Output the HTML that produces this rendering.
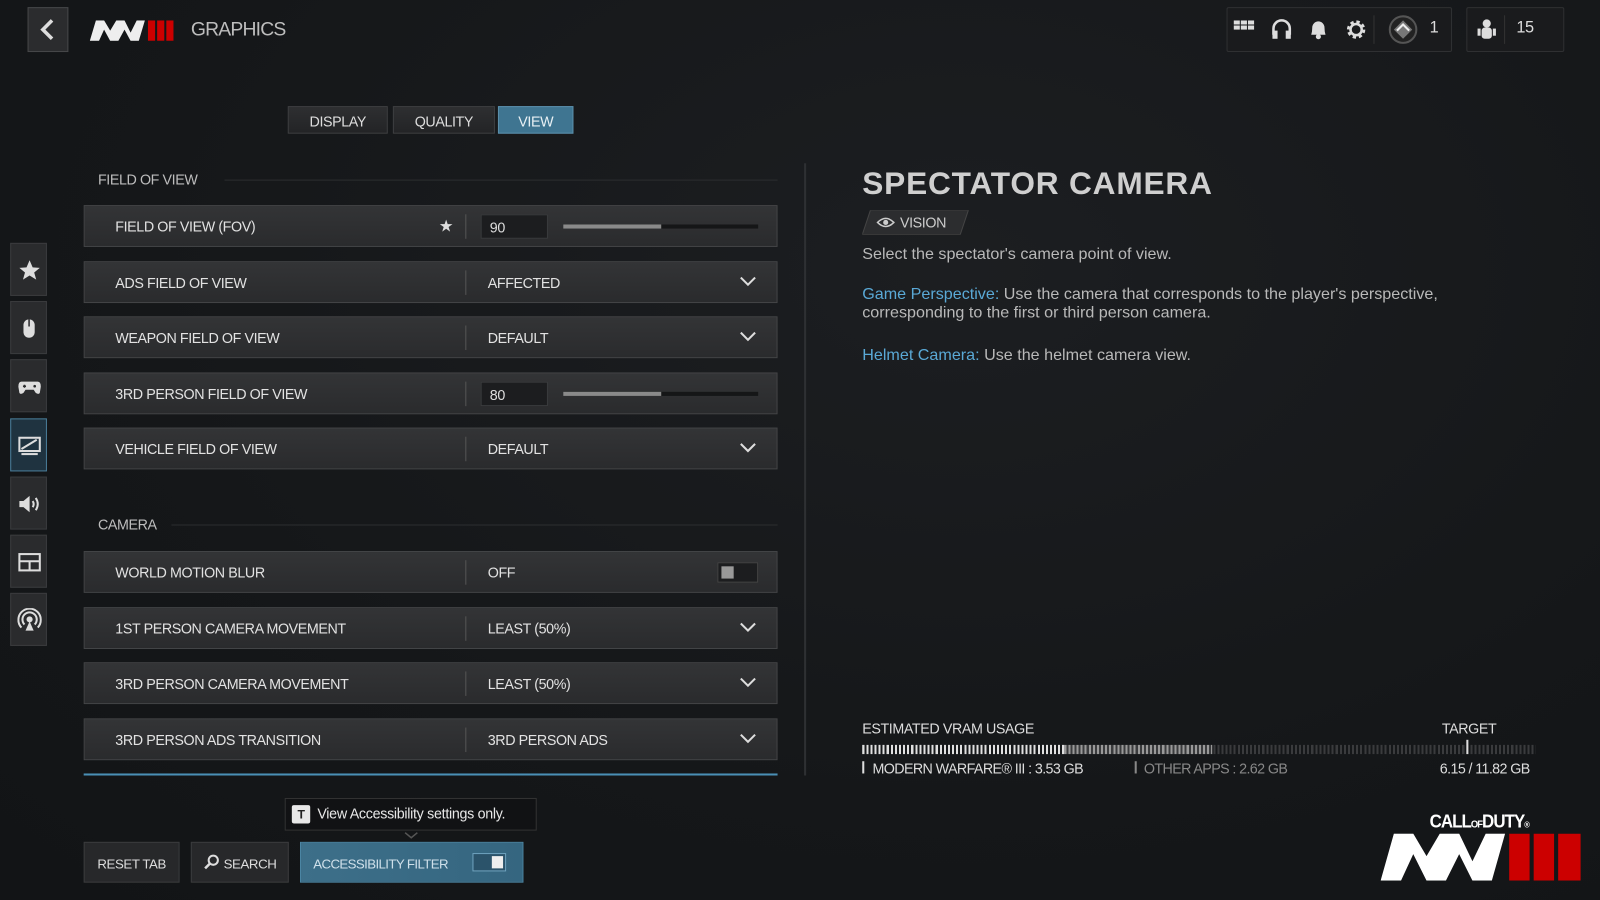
<!DOCTYPE html>
<html><head><meta charset="utf-8"><style>
*{margin:0;padding:0;box-sizing:border-box}
html,body{width:1600px;height:900px;overflow:hidden;background:#141619}
#w{position:absolute;left:0;top:0;width:1568px;height:882px;transform:scale(1.020408);transform-origin:0 0;
background:radial-gradient(ellipse at 60% 30%,#1c1e21 0%,#151719 60%,#121416 100%);
font-family:"Liberation Sans",sans-serif;color:#d8d8d8;letter-spacing:-0.4px}
.a{position:absolute}
.row{position:absolute;left:82px;width:680px;height:41px;background:linear-gradient(#333436,#2a2b2d);border:1px solid #444547}
.row .l{position:absolute;left:30px;top:12px;font-size:14px;color:#e2e2e2}
.row .d{position:absolute;left:373px;top:8px;width:1px;height:24px;background:#555}
.row .v{position:absolute;left:395px;top:12px;font-size:14px;color:#e2e2e2}
.chev{position:absolute;right:20px;top:14px;width:16px;height:10px}
.inp{position:absolute;left:388px;top:8px;width:66px;height:24px;background:#1c1d1f;border:1px solid #3a3b3d;font-size:14px;padding:4px 0 0 8px;color:#ddd}
.sl{position:absolute;left:469px;top:18px;width:191px;height:4px;background:#151617}
.sl i{position:absolute;left:0;top:0;width:96px;height:4px;background:#8a8a8a}
.hd{position:absolute;left:96px;font-size:14px;color:#bdbdbd}
.hl{position:absolute;left:220px;width:542px;height:1px;background:#2c2e30}
.tab{position:absolute;top:104px;height:27px;background:linear-gradient(#2e2f31,#232426);border:1px solid #3f4042;font-size:14px;text-align:center;padding-top:6px;color:#ddd}
.sb{position:absolute;left:10px;width:36px;height:52px;background:#2a2b2d;border:1px solid #3a3b3d}
.sb svg{position:absolute;left:6px;top:14px}
.btn{position:absolute;top:825px;height:40px;background:#27282a;border:1px solid #3a3b3d;font-size:13px;color:#ddd;padding-top:13px;text-align:center}
.p{position:absolute;left:845px;font-family:"Liberation Sans",sans-serif;font-size:15.8px;color:#b9b9b9;letter-spacing:0}
.b{color:#5aa9d6}
</style></head><body><div id="w">
<!-- top -->
<div class="a" style="left:27px;top:7px;width:40px;height:44px;background:#2b2c2e;border:1px solid #464749"></div>
<svg class="a" style="left:36px;top:17px" width="22" height="24"><path d="M15 3 L6 12 L15 21" stroke="#ddd" stroke-width="3.5" fill="none"/></svg>
<svg class="a" style="left:88px;top:20px" width="84" height="20"><path d="M0 20 L6 0 L14 0 L20 10 L26 0 L34 0 L40 12 L46 0 L54 0 L48 20 L40 20 L34 9 L28 20 L20 20 L14 9 L9 20 Z" fill="#eee"/><rect x="57" y="0" width="7" height="20" fill="#c00"/><rect x="66" y="0" width="7" height="20" fill="#c00"/><rect x="75" y="0" width="7" height="20" fill="#c00"/></svg>
<div class="a" style="left:187px;top:19px;font-size:19px;color:#bdbdbd;letter-spacing:-0.8px">GRAPHICS</div>
<div class="a" style="left:1202px;top:7px;width:221px;height:44px;background:#1a1b1d;border:1px solid #2f3032;border-radius:2px"></div>
<div class="a" style="left:1346px;top:15px;width:1px;height:28px;background:#333"></div>
<div class="a" style="left:1437px;top:7px;width:96px;height:44px;background:#1a1b1d;border:1px solid #2f3032;border-radius:2px"></div>
<div class="a" style="left:1474px;top:15px;width:1px;height:28px;background:#333"></div>
<svg class="a" style="left:1209px;top:20px" width="22" height="16"><g fill="#ddd"><rect x="0" y="0" width="6" height="4"/><rect x="7" y="0" width="6" height="4"/><rect x="14" y="0" width="6" height="4"/><rect x="0" y="5" width="6" height="4"/><rect x="7" y="5" width="6" height="4"/><rect x="14" y="5" width="6" height="4"/></g></svg>
<svg class="a" style="left:1245px;top:18px" width="22" height="22"><path d="M3 16 V10 A8 8 0 0 1 19 10 V16" stroke="#ddd" stroke-width="2.5" fill="none"/><rect x="2" y="12" width="5" height="8" fill="#ddd"/><rect x="15" y="12" width="5" height="8" fill="#ddd"/></svg>
<svg class="a" style="left:1282px;top:18px" width="20" height="22"><path d="M3 16 Q4 13 4 9 A6 6 0 0 1 16 9 Q16 13 17 16 Z" fill="#ddd"/><circle cx="10" cy="18" r="2.5" fill="#ddd"/></svg>
<svg class="a" style="left:1318px;top:18px" width="22" height="22"><circle cx="11" cy="11" r="7" stroke="#ddd" stroke-width="4" stroke-dasharray="3 2.5" fill="none"/><circle cx="11" cy="11" r="5.5" stroke="#ddd" stroke-width="2.5" fill="none"/></svg>
<svg class="a" style="left:1360px;top:14px" width="30" height="30"><circle cx="15" cy="15" r="13" stroke="#555" stroke-width="2" fill="#222"/><path d="M15 6 L24 15 L15 24 L6 15 Z" fill="#777"/><path d="M9 16 L15 10 L21 16" stroke="#eee" stroke-width="2" fill="none"/></svg>
<div class="a" style="left:1401px;top:19px;font-size:16px;color:#ddd">1</div>
<svg class="a" style="left:1446px;top:18px" width="22" height="22"><circle cx="11" cy="5" r="4" fill="#ddd"/><rect x="6" y="9" width="10" height="11" rx="3" fill="#ddd"/><rect x="2" y="10" width="3" height="7" fill="#ddd"/><rect x="17" y="10" width="3" height="7" fill="#ddd"/></svg>
<div class="a" style="left:1486px;top:19px;font-size:16px;color:#ddd">15</div>
<!-- tabs -->
<div class="tab" style="left:282px;width:98px">DISPLAY</div>
<div class="tab" style="left:385px;width:100px">QUALITY</div>
<div class="tab" style="left:488px;width:74px;background:#3f7591;border-color:#5b8fab;color:#e8f0f4">VIEW</div>
<!-- sidebar -->
<div class="sb" style="top:238px"><svg width="24" height="24"><path d="M12 2 L15 9 L22 9.5 L16.5 14 L18.5 21 L12 17 L5.5 21 L7.5 14 L2 9.5 L9 9 Z" fill="#ddd"/></svg></div>
<div class="sb" style="top:295px"><svg width="24" height="24"><rect x="6" y="3" width="11" height="18" rx="5.5" fill="#ddd"/><line x1="11.5" y1="3" x2="11.5" y2="10" stroke="#2a2b2d" stroke-width="1.5"/></svg></div>
<div class="sb" style="top:352px"><svg width="24" height="24"><path d="M4 7 H20 Q23 7 23 12 L22 18 Q21 20 18 18 L16 15 H8 L6 18 Q3 20 2 18 L1 12 Q1 7 4 7 Z" fill="#ddd"/><path d="M7 10 V13 M5.5 11.5 H8.5" stroke="#2a2b2d" stroke-width="1.5"/><circle cx="17" cy="11.5" r="1.3" fill="#2a2b2d"/></svg></div>
<div class="sb" style="top:410px;background:#1f3340;border-color:#4a7d99"><svg width="24" height="24"><rect x="2" y="4" width="20" height="13" fill="none" stroke="#ddd" stroke-width="2"/><path d="M4 15 L19 6" stroke="#ddd" stroke-width="2"/><rect x="4" y="19" width="16" height="2" fill="#ddd"/></svg></div>
<div class="sb" style="top:467px"><svg width="24" height="24"><path d="M2 9 H6 L12 4 V20 L6 15 H2 Z" fill="#ddd"/><path d="M15 9 Q17 12 15 15 M18 6 Q22 12 18 18" stroke="#ddd" stroke-width="2" fill="none"/></svg></div>
<div class="sb" style="top:524px"><svg width="24" height="24"><rect x="2" y="4" width="20" height="16" fill="none" stroke="#ddd" stroke-width="2"/><path d="M2 11 H22 M12 11 V20" stroke="#ddd" stroke-width="2"/></svg></div>
<div class="sb" style="top:581px"><svg width="24" height="24"><circle cx="12" cy="11" r="3" fill="#ddd"/><path d="M7 16 A7 7 0 1 1 17 16 M4 19 A11 11 0 1 1 20 19" stroke="#ddd" stroke-width="2" fill="none"/><path d="M12 13 L8 22 H16 Z" fill="#ddd"/></svg></div>
<!-- content -->
<div class="hd" style="top:168px">FIELD OF VIEW</div><div class="hl" style="top:176px"></div>
<div class="row" style="top:201px"><div class="l">FIELD OF VIEW (FOV)</div><div class="a" style="left:347px;top:10px;font-size:16px;color:#ddd">★</div><div class="d"></div><div class="inp">90</div><div class="sl"><i></i></div></div>
<div class="row" style="top:256px"><div class="l">ADS FIELD OF VIEW</div><div class="d"></div><div class="v">AFFECTED</div><svg class="chev"><path d="M1 1 L8 8 L15 1" stroke="#ddd" stroke-width="2" fill="none"/></svg></div>
<div class="row" style="top:310px"><div class="l">WEAPON FIELD OF VIEW</div><div class="d"></div><div class="v">DEFAULT</div><svg class="chev"><path d="M1 1 L8 8 L15 1" stroke="#ddd" stroke-width="2" fill="none"/></svg></div>
<div class="row" style="top:365px"><div class="l">3RD PERSON FIELD OF VIEW</div><div class="d"></div><div class="inp">80</div><div class="sl"><i></i></div></div>
<div class="row" style="top:419px"><div class="l">VEHICLE FIELD OF VIEW</div><div class="d"></div><div class="v">DEFAULT</div><svg class="chev"><path d="M1 1 L8 8 L15 1" stroke="#ddd" stroke-width="2" fill="none"/></svg></div>
<div class="hd" style="top:506px">CAMERA</div><div class="hl" style="top:514px;left:168px;width:594px"></div>
<div class="row" style="top:540px"><div class="l">WORLD MOTION BLUR</div><div class="d"></div><div class="v">OFF</div><div class="a" style="left:620px;top:10px;width:40px;height:20px;background:#1c1d1f;border:1px solid #444"><div class="a" style="left:3px;top:3px;width:12px;height:12px;background:#999"></div></div></div>
<div class="row" style="top:595px"><div class="l">1ST PERSON CAMERA MOVEMENT</div><div class="d"></div><div class="v">LEAST (50%)</div><svg class="chev"><path d="M1 1 L8 8 L15 1" stroke="#ddd" stroke-width="2" fill="none"/></svg></div>
<div class="row" style="top:649px"><div class="l">3RD PERSON CAMERA MOVEMENT</div><div class="d"></div><div class="v">LEAST (50%)</div><svg class="chev"><path d="M1 1 L8 8 L15 1" stroke="#ddd" stroke-width="2" fill="none"/></svg></div>
<div class="row" style="top:704px"><div class="l">3RD PERSON ADS TRANSITION</div><div class="d"></div><div class="v">3RD PERSON ADS</div><svg class="chev"><path d="M1 1 L8 8 L15 1" stroke="#ddd" stroke-width="2" fill="none"/></svg></div>
<div class="a" style="left:82px;top:758px;width:680px;height:2px;background:#4a8fb5"></div>
<div class="a" style="left:788px;top:160px;width:2px;height:600px;background:#2e3033"></div>
<!-- bottom -->
<div class="a" style="left:279px;top:782px;width:247px;height:32px;background:#111214;border:1px solid #333"></div>
<div class="a" style="left:286px;top:789px;width:18px;height:18px;background:#e8e8e8;border-radius:2px;color:#222;font-size:12px;font-weight:bold;text-align:center;padding-top:2px">T</div>
<div class="a" style="left:311px;top:789px;font-size:14px;color:#e8e8e8;letter-spacing:-0.3px">View Accessibility settings only.</div>
<svg class="a" style="left:396px;top:815px" width="14" height="8"><path d="M1 1 L7 6 L13 1" stroke="#555" stroke-width="1.5" fill="none"/></svg>
<div class="btn" style="left:82px;width:94px">RESET TAB</div>
<div class="btn" style="left:187px;width:96px;padding-left:20px">SEARCH</div>
<svg class="a" style="left:200px;top:837px" width="16" height="16"><circle cx="9" cy="6" r="4.5" stroke="#ddd" stroke-width="2" fill="none"/><path d="M6 9 L1 14" stroke="#ddd" stroke-width="2.5"/></svg>
<div class="btn" style="left:294px;width:219px;background:linear-gradient(90deg,#3d6f89,#356680);border-color:#4b85a3;text-align:left;padding-left:12px;color:#cfe0ea;letter-spacing:-0.6px">ACCESSIBILITY FILTER</div>
<div class="a" style="left:463px;top:836px;width:33px;height:18px;border:1px solid #6fa3bf;background:#2b536a"><div class="a" style="left:18px;top:2px;width:11px;height:12px;background:#eee"></div></div>
<!-- right panel -->
<div class="a" style="left:845px;top:162px;font-weight:bold;font-size:31px;color:#cfcfcf;letter-spacing:0.8px">SPECTATOR CAMERA</div>
<svg class="a" style="left:845px;top:206px" width="105" height="24"><path d="M8 0 H104 L96 24 H0 Z" fill="#2c2d2f" stroke="#444"/></svg>
<svg class="a" style="left:859px;top:211px" width="18" height="14"><path d="M1 7 Q9 -1 17 7 Q9 15 1 7 Z" stroke="#ccc" stroke-width="1.5" fill="none"/><circle cx="9" cy="7" r="2.5" fill="#ccc"/></svg>
<div class="a" style="left:882px;top:210px;font-size:14px;color:#ccc">VISION</div>
<div class="p" style="top:241px">Select the spectator's camera point of view.</div>
<div class="p" style="top:280px"><span class="b">Game Perspective:</span> Use the camera that corresponds to the player's perspective,<br>corresponding to the first or third person camera.</div>
<div class="p" style="top:340px"><span class="b">Helmet Camera:</span> Use the helmet camera view.</div>
<div class="a" style="left:845px;top:706px;font-size:14px;color:#ddd">ESTIMATED VRAM USAGE</div>
<div class="a" style="left:1413px;top:706px;font-size:14px;color:#ddd">TARGET</div>
<div class="a" style="left:845px;top:730px;width:660px;height:9px;background:repeating-linear-gradient(90deg,#3a3b3d 0 2px,transparent 2px 4px)"></div>
<div class="a" style="left:845px;top:730px;width:198px;height:9px;background:repeating-linear-gradient(90deg,#e0e0e0 0 2px,transparent 2px 4px)"></div>
<div class="a" style="left:1043px;top:730px;width:145px;height:9px;background:repeating-linear-gradient(90deg,#999 0 2px,transparent 2px 4px)"></div>
<div class="a" style="left:1437px;top:725px;width:2px;height:14px;background:#ddd"></div>
<div class="a" style="left:845px;top:746px;width:2px;height:12px;background:#ddd"></div>
<div class="a" style="left:855px;top:745px;font-size:14px;color:#ddd;letter-spacing:-0.6px">MODERN WARFARE® III : 3.53 GB</div>
<div class="a" style="left:1112px;top:746px;width:2px;height:12px;background:#888"></div>
<div class="a" style="left:1121px;top:745px;font-size:14px;color:#888;letter-spacing:-0.6px">OTHER APPS : 2.62 GB</div>
<div class="a" style="left:1411px;top:745px;font-size:14px;color:#ddd;letter-spacing:-0.6px">6.15 / 11.82 GB</div>
<div class="a" style="left:1401px;top:795px;font-weight:bold;font-size:18px;color:#fff;letter-spacing:-1px;transform:scaleX(0.92);transform-origin:0 0">CALL<span style="font-size:10px">OF</span>DUTY<span style="font-size:8px">®</span></div>
<svg class="a" style="left:1353px;top:817px" width="198" height="46"><path d="M0 46 L13 0 L32 0 L45 22 L58 0 L77 0 L90 27 L103 0 L122 0 L109 46 L90 46 L77 20 L64 46 L45 46 L32 20 L20 46 Z" fill="#fff"/><rect x="126" y="0" width="20" height="46" fill="#c00"/><rect x="150" y="0" width="20" height="46" fill="#c00"/><rect x="174" y="0" width="22" height="46" fill="#c00"/></svg>
</div></body></html>
